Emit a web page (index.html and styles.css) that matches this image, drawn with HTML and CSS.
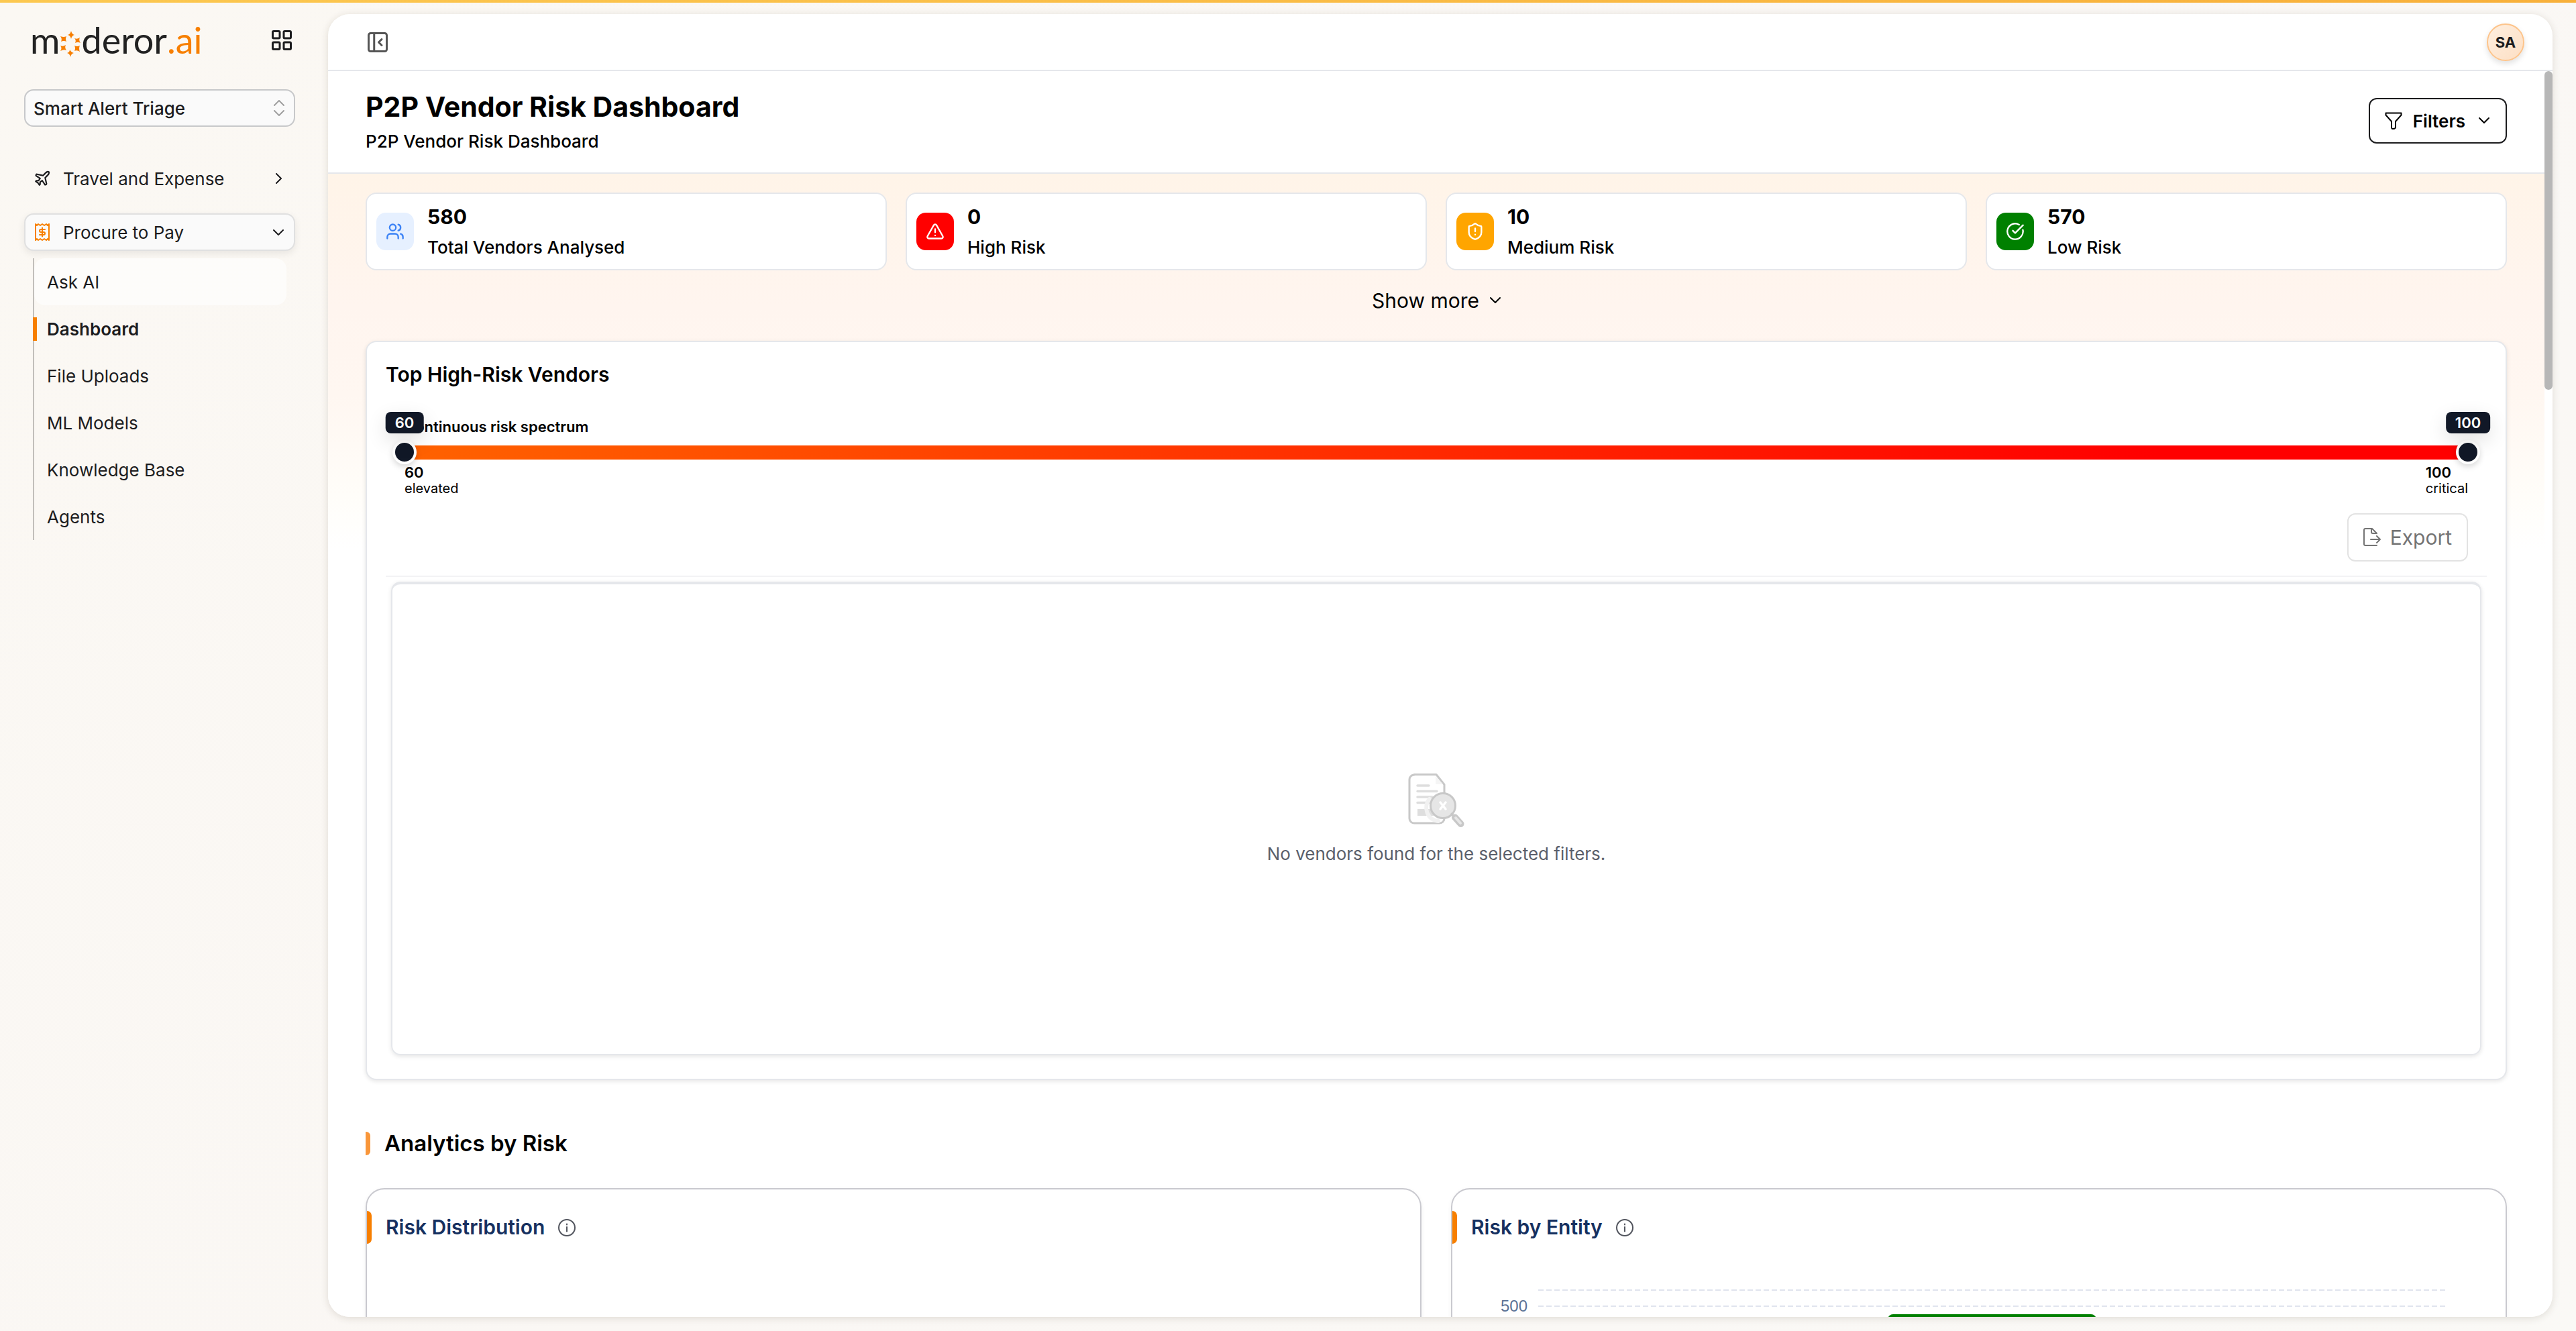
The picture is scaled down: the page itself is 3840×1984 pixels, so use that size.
FILE: index.html
```html
<!DOCTYPE html>
<html lang="en">
<head>
  <meta charset="UTF-8">
  <meta name="viewport" content="width=device-width, initial-scale=1.0">
  <title>P2P Vendor Risk Dashboard</title>
  <link rel="stylesheet" href="styles.css">
</head>
<body>
  <div class="top-line"></div>
  <div class="layout">
    <aside class="sidebar">
      <div class="brand">
        <a href="#" class="logo" aria-label="moderor.ai">
          <span>m</span>
          <svg class="logo-ring" viewBox="0 0 32 40">
            <path d="M17 0Q18 5 22 6Q18 7 17 12Q16 7 12 6Q16 5 17 0Z"/>
            <path d="M1 8Q6 10 10 8Q8 12 10 16Q6 14 2 16Q4 12 1 8Z"/>
            <path d="M22 11Q26 13 30 10Q28 14 31 18Q27 16 23 18Q25 14 22 11Z"/>
            <path d="M1 22Q5 24 9 21Q7 25 10 29Q6 27 1 30Q4 26 1 22Z"/>
            <path d="M22 22Q26 24 30 22Q28 26 30 31Q26 28 22 30Q24 26 22 22Z"/>
            <path d="M15 28Q17 32 21 33Q17 34 16 39Q15 34 11 33Q15 32 15 28Z"/>
          </svg>
          <span>deror</span><span class="logo-ai">.ai</span>
        </a>
        <button class="icon-btn" aria-label="Apps">
          <svg class="icon-lg" viewBox="0 0 24 24"><rect x="3" y="3" width="7" height="7" rx="1"/><rect x="14" y="3" width="7" height="7" rx="1"/><rect x="3" y="14" width="7" height="7" rx="1"/><rect x="14" y="14" width="7" height="7" rx="1"/></svg>
        </button>
      </div>

      <div class="workspace">
        <select aria-label="Workspace">
          <option>Smart Alert Triage</option>
        </select>
        <svg class="workspace-arrows" viewBox="0 0 16 24"><path d="M1 8l7-7 7 7M1 16l7 7 7-7"/></svg>
      </div>

      <nav>
        <a href="#" class="nav-item">
          <svg class="icon-sm" viewBox="0 0 24 24"><path d="M17.8 19.2 16 11l3.5-3.5C21 6 21.5 4 21 3c-1-.5-3 0-4.5 1.5L13 8 4.8 6.2c-.5-.1-.9.1-1.1.5l-.3.5c-.2.5-.1 1 .3 1.3L9 12l-2 3H4l-1 1 3 2 2 3 1-1v-3l3-2 3.5 5.3c.3.4.8.5 1.3.3l.5-.2c.4-.3.6-.7.5-1.2z"/></svg>
          <span>Travel and Expense</span>
          <svg class="arrow" viewBox="0 0 16 16"><path d="M5 1l7 7-7 7"/></svg>
        </a>
        <a href="#" class="nav-item open">
          <svg class="icon-sm receipt" viewBox="0 0 24 26"><path d="M2 1l2 2 2-2 3 2 3-2 3 2 3-2 2 2 2-2v24l-2-2-2 2-3-2-3 2-3-2-3 2-2-2-2 2z"/><path d="M16 9H10a2 2 0 0 0 0 4h4a2 2 0 0 1 0 4H8M12 6.5v13"/></svg>
          <span>Procure to Pay</span>
          <svg class="arrow" viewBox="0 0 16 16"><path d="M1 5l7 7 7-7"/></svg>
        </a>
        <ul class="subnav">
          <li><a href="#" class="hovered">Ask AI</a></li>
          <li><a href="#" class="current">Dashboard</a></li>
          <li><a href="#">File Uploads</a></li>
          <li><a href="#">ML Models</a></li>
          <li><a href="#">Knowledge Base</a></li>
          <li><a href="#">Agents</a></li>
        </ul>
      </nav>
    </aside>

    <main class="main">
      <header class="topbar">
        <button class="icon-btn collapse" aria-label="Collapse sidebar">
          <svg class="icon-lg" viewBox="0 0 24 24"><rect x="3" y="3" width="18" height="18" rx="2"/><path d="M8.5 3v18M16 9l-3 3 3 3"/></svg>
        </button>
        <button class="avatar">SA</button>
      </header>

      <div class="scroll-area">
        <div class="page">
          <div class="page-header">
            <div>
              <h1>P2P Vendor Risk Dashboard</h1>
              <p>P2P Vendor Risk Dashboard</p>
            </div>
            <button class="filters">
              <svg class="icon-filter" viewBox="0 0 26 26"><path d="M1.5 1.5h23v3L16 14v9.5l-2 1.5h-3l-1-1.5V14L1.5 4.5z"/></svg>
              Filters
              <svg class="arrow" viewBox="0 0 16 16"><path d="M1 4l7 7 7-7"/></svg>
            </button>
          </div>

          <div class="content">
            <section class="kpis">
              <div class="kpi">
                <div class="kpi-icon blue">
                  <svg viewBox="0 0 24 24"><path d="M16 21v-2a4 4 0 0 0-4-4H6a4 4 0 0 0-4 4v2M22 21v-2a4 4 0 0 0-3-3.87M16 3.13a4 4 0 0 1 0 7.75"/><circle cx="9" cy="7" r="4"/></svg>
                </div>
                <div class="kpi-text"><strong>580</strong><span>Total Vendors Analysed</span></div>
              </div>
              <div class="kpi">
                <div class="kpi-icon red">
                  <svg viewBox="0 0 24 24"><path d="m21.73 18-8-14a2 2 0 0 0-3.48 0l-8 14A2 2 0 0 0 4 21h16a2 2 0 0 0 1.73-3M12 9v4M12 17h.01"/></svg>
                </div>
                <div class="kpi-text"><strong>0</strong><span>High Risk</span></div>
              </div>
              <div class="kpi">
                <div class="kpi-icon amber">
                  <svg viewBox="0 0 24 24"><path d="M20 13c0 5-3.5 7.5-7.66 8.95a1 1 0 0 1-.67-.01C7.5 20.5 4 18 4 13V6a1 1 0 0 1 1-1c2 0 4.5-1.2 6.24-2.72a1.17 1.17 0 0 1 1.52 0C14.51 3.81 17 5 19 5a1 1 0 0 1 1 1zM12 8v4M12 16h.01"/></svg>
                </div>
                <div class="kpi-text"><strong>10</strong><span>Medium Risk</span></div>
              </div>
              <div class="kpi">
                <div class="kpi-icon green">
                  <svg viewBox="0 0 24 24"><path d="M21.8 10A10 10 0 1 1 17 3.34M9 11l3 3L22 4"/></svg>
                </div>
                <div class="kpi-text"><strong>570</strong><span>Low Risk</span></div>
              </div>
            </section>

            <button class="show-more">
              Show more
              <svg class="arrow" viewBox="0 0 16 16"><path d="M1 4l7 7 7-7"/></svg>
            </button>

            <section class="panel">
              <h2>Top High-Risk Vendors</h2>
              <div class="spectrum">
                <div class="spectrum-label">Continuous risk spectrum</div>
                <div class="track">
                  <input type="range" min="60" max="100" value="60" aria-label="Minimum risk score">
                  <input type="range" min="60" max="100" value="100" aria-label="Maximum risk score">
                  <output class="bubble low">60</output>
                  <output class="bubble high">100</output>
                </div>
                <div class="scale">
                  <div><b>60</b><span>elevated</span></div>
                  <div><b>100</b><span>critical</span></div>
                </div>
                <button class="export" disabled>
                  <svg viewBox="0 0 26 28"><path d="M20 26H3a2 2 0 0 1-2-2V3a2 2 0 0 1 2-2h10l7 7H14a2 2 0 0 1-2-2V1M11 17h14M20 12l5 5-5 5"/></svg>
                  Export
                </button>
              </div>
              <div class="empty">
                <svg class="empty-icon" viewBox="0 0 84 80">
                  <path d="M9 1.5h33l12 15V67a7 7 0 0 1-7 7H9a7 7 0 0 1-7-7V9a7 7 0 0 1 7-7z" fill="#fff" stroke="#c8c8c8" stroke-width="3"/>
                  <path d="M41 4v12h11z" fill="#f5f5f5"/>
                  <path d="M14 18h17M14 26.5h29M14 35h22M14 43.5h20" stroke="#dedede" stroke-width="3.5" stroke-linecap="round"/>
                  <path d="M14 53h24v10H14z" fill="#dedede"/>
                  <path d="M32 38a20 20 0 0 0 13 33" stroke="#f1f1f1" stroke-width="6" fill="none"/>
                  <circle cx="52" cy="48" r="18.5" fill="#e6e6e6" stroke="#c8c8c8" stroke-width="3"/>
                  <path d="M48 43l8 10M56 43l-8 10" stroke="#fff" stroke-width="3.5" stroke-linecap="round"/>
                  <path d="M65 60l4 5" stroke="#c8c8c8" stroke-width="3"/>
                  <path d="M70 65.5l8.5 9.5" stroke="#c8c8c8" stroke-width="10" stroke-linecap="round"/>
                  <path d="M71 66l7 8" stroke="#e6e6e6" stroke-width="4" stroke-linecap="round"/>
                </svg>
                <p>No vendors found for the selected filters.</p>
              </div>
            </section>

            <h2 class="section-title">Analytics by Risk</h2>
            <section class="charts">
              <article class="chart">
                <h3>Risk Distribution
                  <svg class="info" viewBox="0 0 26 26"><circle cx="13" cy="13" r="12"/><path d="M13 12v6.5M13 7.5v1"/></svg>
                </h3>
              </article>
              <article class="chart">
                <h3>Risk by Entity
                  <svg class="info" viewBox="0 0 26 26"><circle cx="13" cy="13" r="12"/><path d="M13 12v6.5M13 7.5v1"/></svg>
                </h3>
                <div class="plot">
                  <div class="grid-line"></div>
                  <span class="tick">500</span>
                  <div class="grid-line"></div>
                  <div class="bar"></div>
                </div>
              </article>
            </section>
          </div>
        </div>
        <div class="scrollbar"><div class="scroll-thumb"></div></div>
      </div>
    </main>
  </div>
</body>
</html>
```
FILE: styles.css
```css
* {
  box-sizing: border-box;
}
body {
  margin: 0;
  height: 100vh;
  display: flex;
  flex-direction: column;
  overflow: hidden;
  background: linear-gradient(135deg, #fbf8f3, #faf7f4 50%, #faf9f6);
  font-family: Inter, "Noto Sans", sans-serif;
  font-size: 26px;
  color: #000;
}
h1, h2, h3, p, ul {
  margin: 0;
  padding: 0;
}
a {
  color: inherit;
  text-decoration: none;
}
button, select {
  font: inherit;
  color: inherit;
}
svg {
  flex: none;
  fill: none;
  stroke: currentColor;
  stroke-width: 2;
  stroke-linecap: round;
  stroke-linejoin: round;
}
.top-line {
  flex: none;
  height: 4px;
  background: linear-gradient(90deg, #fcc850, #f8b03a);
}
.layout {
  flex: 1;
  min-height: 0;
  display: grid;
  grid-template-columns: 489px minmax(0, 1fr);
}

/* Sidebar */
.sidebar {
  padding: 28px 49px 0 36px;
  color: #1c1c1e;
}
.brand {
  display: flex;
  justify-content: space-between;
  align-items: center;
  height: 56px;
  padding: 0 2px 0 9px;
}
.logo {
  display: flex;
  align-items: center;
  font-family: Lato, sans-serif;
  font-size: 54px;
  font-weight: 400;
  line-height: 56px;
  color: #222;
}
.logo-ring {
  width: 32px;
  height: 40px;
  margin-top: 12px;
  stroke: none;
  fill: #f77f00;
}
.logo-ai {
  color: #f77f00;
}
.icon-btn {
  display: flex;
  padding: 0;
  border: 0;
  background: none;
}
.icon-lg {
  width: 36px;
  height: 36px;
}
.icon-sm {
  width: 26px;
  height: 26px;
}
.arrow {
  width: 16px;
  height: 16px;
}
.workspace {
  position: relative;
  margin-top: 45px;
}
.workspace select {
  appearance: none;
  width: 100%;
  height: 56px;
  padding: 0 12px;
  border: 2px solid #c7c8ca;
  border-radius: 14px;
  background: #fafafa;
  font-weight: 500;
}
.workspace-arrows {
  position: absolute;
  right: 16px;
  top: 16px;
  width: 16px;
  height: 24px;
  color: #a0a0a0;
}
nav {
  margin-top: 49px;
}
.nav-item {
  display: flex;
  align-items: center;
  height: 56px;
  padding: 0 15px 0 12px;
  border: 2px solid transparent;
  border-radius: 14px;
}
.nav-item span {
  flex: 1;
  margin-left: 18px;
}
.nav-item.open {
  margin-top: 24px;
  background: #fafafa;
  border-color: #e0e0e0;
  box-shadow: 0 4px 12px rgba(0, 0, 0, 0.08);
}
.receipt {
  color: #f77f00;
}
.subnav {
  list-style: none;
  margin: 11px 13px 0 13px;
  border-left: 2px solid #c2bfbb;
}
.subnav a {
  display: flex;
  align-items: center;
  height: 70px;
  padding-left: 19px;
}
.subnav .hovered {
  background: rgba(255, 255, 255, 0.6);
  border-radius: 16px;
}
.subnav .current {
  font-weight: 600;
}
.subnav .current::before {
  content: "";
  width: 6px;
  height: 35px;
  margin: 0 15px 0 -21px;
  background: #f77f00;
}

/* Main frame */
.main {
  display: flex;
  flex-direction: column;
  margin: 17px 35px 21px 0;
  min-height: 0;
  border-radius: 32px;
  overflow: hidden;
  background: #fff;
  box-shadow: 0 2px 12px rgba(60, 40, 20, 0.14);
}
.topbar {
  flex: none;
  display: flex;
  justify-content: space-between;
  align-items: center;
  padding: 14px 42px 13px 56px;
  border-bottom: 2px solid #e5e7eb;
}
.collapse {
  color: #555;
}
.avatar {
  width: 56px;
  height: 56px;
  padding: 0;
  border: 2px solid #fdc48b;
  border-radius: 50%;
  background: linear-gradient(135deg, #feefe0, #fddfc4);
  box-shadow: 0 4px 8px rgba(0, 0, 0, 0.12);
  font-size: 22px;
  font-weight: 700;
  color: #1c1c1e;
}
.scroll-area {
  flex: 1;
  min-height: 0;
  display: grid;
  grid-template-columns: minmax(0, 1fr) 12px;
}
.page {
  min-height: 0;
  overflow: hidden;
}
.scroll-thumb {
  height: 475px;
  border-radius: 6px;
  background: #b7b7b7;
}
.page-header {
  display: flex;
  justify-content: space-between;
  align-items: center;
  padding: 28px 56px 31px;
  border-bottom: 2px solid #e5e7eb;
}
.page-header h1 {
  font-size: 41px;
  line-height: 50px;
  font-weight: 700;
}
.page-header p {
  margin-top: 12px;
  line-height: 30px;
  font-weight: 500;
}
.filters {
  display: flex;
  align-items: center;
  gap: 16px;
  height: 68px;
  padding: 0 24px 0 22px;
  border: 2px solid #1c1c1e;
  border-radius: 12px;
  background: #fff;
  font-weight: 600;
}
.icon-filter {
  width: 26px;
  height: 26px;
}
.filters .arrow {
  margin-left: 4px;
}
.content {
  padding: 28px 56px;
  background: linear-gradient(180deg, #fff4e8 0, #fff5ef 200px, #fff7f1 330px, #fffdf9 480px, #fff 560px);
}

/* KPI cards */
.kpis {
  display: grid;
  grid-template-columns: repeat(4, 1fr);
  gap: 28px;
}
.kpi {
  display: flex;
  align-items: center;
  gap: 20px;
  height: 116px;
  padding: 0 14px;
  border: 2px solid #e5e7eb;
  border-radius: 16px;
  background: #fff;
}
.kpi-icon {
  display: flex;
  align-items: center;
  justify-content: center;
  width: 56px;
  height: 56px;
  border-radius: 14px;
  color: #fff;
}
.kpi-icon svg {
  width: 28px;
  height: 28px;
}
.blue {
  background: #e6f0ff;
  color: #3b82f6;
}
.red {
  background: #f00;
}
.amber {
  background: orange;
}
.green {
  background: green;
}
.kpi-text {
  padding-top: 4px;
}
.kpi strong, .kpi span {
  display: block;
}
.kpi strong {
  font-size: 30px;
  line-height: 44px;
}
.kpi span {
  line-height: 48px;
  font-weight: 500;
}
.show-more {
  display: flex;
  align-items: center;
  gap: 16px;
  margin: 24px auto 39px;
  padding: 0;
  border: 0;
  background: none;
  font-size: 30px;
  line-height: 42px;
}

/* High risk vendors */
.panel {
  padding: 28px 28px 35px;
  border: 2px solid #e5e7eb;
  border-radius: 16px;
  background: #fff;
  box-shadow: 0 2px 6px rgba(0, 0, 0, 0.1);
}
.panel h2 {
  font-size: 30px;
  line-height: 40px;
  font-weight: 600;
}
.spectrum {
  margin-top: 44px;
  padding: 0 28px 21px;
  border-bottom: 2px solid #f3f3f5;
}
.spectrum-label {
  font-size: 22px;
  line-height: 28px;
  font-weight: 600;
}
.track {
  position: relative;
  height: 21px;
  margin: 14px 0 7px;
  background: linear-gradient(90deg, #ff6200, #f00 85%);
}
.track input {
  appearance: none;
  position: absolute;
  left: -18px;
  top: -8px;
  width: calc(100% + 36px);
  height: 36px;
  margin: 0;
  background: none;
  pointer-events: none;
}
.track input::-webkit-slider-thumb {
  appearance: none;
  width: 36px;
  height: 36px;
  border: 4px solid #fff;
  border-radius: 50%;
  background: #111827;
  box-shadow: 0 4px 8px rgba(0, 0, 0, 0.15);
  pointer-events: auto;
}
.bubble {
  position: absolute;
  top: -50px;
  padding: 0 14px;
  border-radius: 8px;
  background: #111827;
  box-shadow: 0 10px 30px rgba(0, 0, 0, 0.12);
  color: #fff;
  font-size: 22px;
  line-height: 32px;
  font-weight: 600;
}
.low {
  left: 0;
  transform: translateX(-50%);
}
.high {
  right: 0;
  transform: translateX(50%);
}
.scale {
  display: flex;
  justify-content: space-between;
}
.scale b, .scale span {
  display: block;
  line-height: 24px;
}
.scale b {
  font-size: 22px;
  font-weight: 600;
}
.scale span {
  font-size: 20px;
}
.export {
  display: flex;
  align-items: center;
  gap: 14px;
  height: 72px;
  margin: 25px 0 0 auto;
  padding: 0 22px;
  border: 2px solid #e3e3e3;
  border-radius: 12px;
  background: #fff;
  color: #747474;
  font-size: 30px;
}
.export svg {
  width: 26px;
  height: 28px;
}
.empty {
  display: flex;
  flex-direction: column;
  align-items: center;
  justify-content: center;
  gap: 24px;
  min-height: 706px;
  margin: 7px 8px 0;
  border: 2px solid #e5e7eb;
  border-top-width: 4px;
  border-radius: 14px;
  box-shadow: 0 2px 6px rgba(0, 0, 0, 0.1);
  color: #5b5f6b;
  line-height: 32px;
}
.empty-icon {
  width: 84px;
  height: 80px;
  stroke: none;
}

/* Analytics */
.section-title {
  display: flex;
  align-items: center;
  gap: 21px;
  margin: 77px 0 49px;
  font-size: 33px;
  line-height: 35px;
  font-weight: 600;
}
.section-title::before {
  content: "";
  width: 7px;
  height: 35px;
  border-radius: 0 6px 6px 0;
  background: #f99639;
}
.charts {
  display: grid;
  grid-template-columns: 1fr 1fr;
  gap: 44px;
}
.chart {
  min-height: 700px;
  padding-top: 32px;
  border: 2px solid #c9c9cf;
  border-radius: 28px;
  background: #fff;
  box-shadow: 0 2px 6px rgba(0, 0, 0, 0.06);
}
.chart h3 {
  display: flex;
  align-items: center;
  font-size: 30px;
  line-height: 49px;
  font-weight: 600;
  color: #16305f;
}
.chart h3::before {
  content: "";
  width: 7px;
  height: 49px;
  margin-right: 21px;
  border-radius: 0 8px 8px 0;
  background: #f77f00;
}
.info {
  width: 26px;
  height: 26px;
  margin-left: 20px;
  color: #52555e;
}
.plot {
  display: grid;
  grid-template-columns: 112px 1fr;
  column-gap: 16px;
  align-items: center;
  margin: 68px 89px 0 0;
}
.grid-line {
  grid-column: 2;
  height: 2px;
  background: repeating-linear-gradient(90deg, #e0e4ee 0 8px, transparent 8px 12px);
}
.tick {
  grid-column: 1;
  margin-top: 11px;
  text-align: right;
  font-family: "Liberation Sans", Arial, sans-serif;
  font-size: 24px;
  line-height: 24px;
  color: #5b7296;
}
.tick + .grid-line {
  margin-top: 11px;
}
.bar {
  grid-column: 2;
  justify-self: center;
  width: 23%;
  height: 300px;
  border-radius: 8px 8px 0 0;
  background: green;
}
```
